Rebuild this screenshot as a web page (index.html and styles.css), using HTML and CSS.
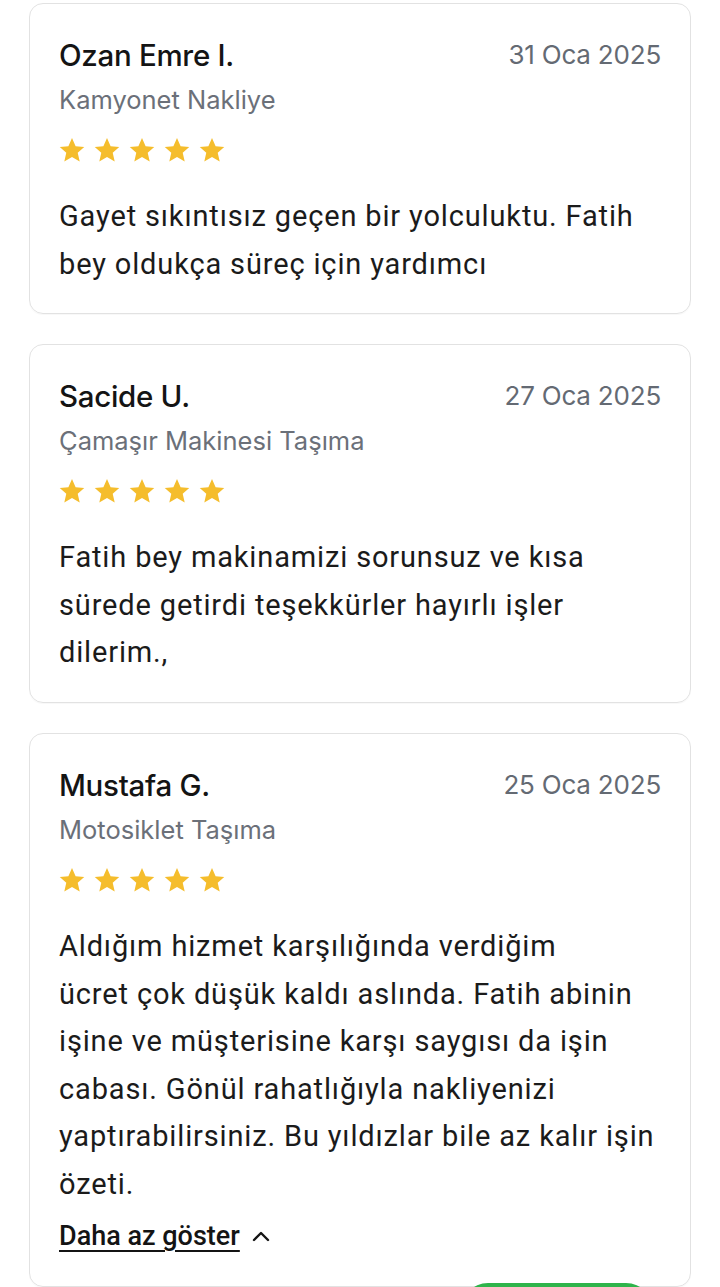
FILE: index.html
```html
<!DOCTYPE html>
<html lang="tr">
<head>
<meta charset="utf-8">
<link rel="stylesheet" href="styles.css">
</head>
<body>
<main class="list">
  <article class="card">
    <header class="head">
      <h3 class="name">Ozan Emre I.</h3>
      <span class="date">31 Oca 2025</span>
    </header>
    <p class="service">Kamyonet Nakliye</p>
    <div class="stars">
      <svg viewBox="0 0 24 24"><path d="M12 1.8l3.1 6.9 7.4.7-5.6 5 1.7 7.4L12 17.9l-6.6 3.9 1.7-7.4-5.6-5 7.4-.7z"/></svg>
      <svg viewBox="0 0 24 24"><path d="M12 1.8l3.1 6.9 7.4.7-5.6 5 1.7 7.4L12 17.9l-6.6 3.9 1.7-7.4-5.6-5 7.4-.7z"/></svg>
      <svg viewBox="0 0 24 24"><path d="M12 1.8l3.1 6.9 7.4.7-5.6 5 1.7 7.4L12 17.9l-6.6 3.9 1.7-7.4-5.6-5 7.4-.7z"/></svg>
      <svg viewBox="0 0 24 24"><path d="M12 1.8l3.1 6.9 7.4.7-5.6 5 1.7 7.4L12 17.9l-6.6 3.9 1.7-7.4-5.6-5 7.4-.7z"/></svg>
      <svg viewBox="0 0 24 24"><path d="M12 1.8l3.1 6.9 7.4.7-5.6 5 1.7 7.4L12 17.9l-6.6 3.9 1.7-7.4-5.6-5 7.4-.7z"/></svg>
    </div>
    <p class="text">Gayet sıkıntısız geçen bir yolculuktu. Fatih<br>bey oldukça süreç için yardımcı</p>
  </article>

  <article class="card">
    <header class="head">
      <h3 class="name">Sacide U.</h3>
      <span class="date">27 Oca 2025</span>
    </header>
    <p class="service">Çamaşır Makinesi Taşıma</p>
    <div class="stars">
      <svg viewBox="0 0 24 24"><path d="M12 1.8l3.1 6.9 7.4.7-5.6 5 1.7 7.4L12 17.9l-6.6 3.9 1.7-7.4-5.6-5 7.4-.7z"/></svg>
      <svg viewBox="0 0 24 24"><path d="M12 1.8l3.1 6.9 7.4.7-5.6 5 1.7 7.4L12 17.9l-6.6 3.9 1.7-7.4-5.6-5 7.4-.7z"/></svg>
      <svg viewBox="0 0 24 24"><path d="M12 1.8l3.1 6.9 7.4.7-5.6 5 1.7 7.4L12 17.9l-6.6 3.9 1.7-7.4-5.6-5 7.4-.7z"/></svg>
      <svg viewBox="0 0 24 24"><path d="M12 1.8l3.1 6.9 7.4.7-5.6 5 1.7 7.4L12 17.9l-6.6 3.9 1.7-7.4-5.6-5 7.4-.7z"/></svg>
      <svg viewBox="0 0 24 24"><path d="M12 1.8l3.1 6.9 7.4.7-5.6 5 1.7 7.4L12 17.9l-6.6 3.9 1.7-7.4-5.6-5 7.4-.7z"/></svg>
    </div>
    <p class="text">Fatih bey makinamizi sorunsuz ve kısa<br>sürede getirdi teşekkürler hayırlı işler<br>dilerim.,</p>
  </article>

  <article class="card">
    <header class="head">
      <h3 class="name">Mustafa G.</h3>
      <span class="date">25 Oca 2025</span>
    </header>
    <p class="service">Motosiklet Taşıma</p>
    <div class="stars">
      <svg viewBox="0 0 24 24"><path d="M12 1.8l3.1 6.9 7.4.7-5.6 5 1.7 7.4L12 17.9l-6.6 3.9 1.7-7.4-5.6-5 7.4-.7z"/></svg>
      <svg viewBox="0 0 24 24"><path d="M12 1.8l3.1 6.9 7.4.7-5.6 5 1.7 7.4L12 17.9l-6.6 3.9 1.7-7.4-5.6-5 7.4-.7z"/></svg>
      <svg viewBox="0 0 24 24"><path d="M12 1.8l3.1 6.9 7.4.7-5.6 5 1.7 7.4L12 17.9l-6.6 3.9 1.7-7.4-5.6-5 7.4-.7z"/></svg>
      <svg viewBox="0 0 24 24"><path d="M12 1.8l3.1 6.9 7.4.7-5.6 5 1.7 7.4L12 17.9l-6.6 3.9 1.7-7.4-5.6-5 7.4-.7z"/></svg>
      <svg viewBox="0 0 24 24"><path d="M12 1.8l3.1 6.9 7.4.7-5.6 5 1.7 7.4L12 17.9l-6.6 3.9 1.7-7.4-5.6-5 7.4-.7z"/></svg>
    </div>
    <p class="text">Aldığım hizmet karşılığında verdiğim<br>ücret çok düşük kaldı aslında. Fatih abinin<br>işine ve müşterisine karşı saygısı da işin<br>cabası. Gönül rahatlığıyla nakliyenizi<br>yaptırabilirsiniz. Bu yıldızlar bile az kalır işin<br>özeti.</p>
    <a class="toggle" href="#"><span class="toggle-label">Daha az göster</span>
      <svg class="chev" viewBox="0 0 20 20"><path d="M3 14l7-7 7 7"/></svg>
    </a>
  </article>
</main>
<div class="fab"></div>
</body>
</html>
```

FILE: styles.css
```css
* { box-sizing: border-box; }

html, body {
  margin: 0;
  padding: 0;
  background: #ffffff;
}

body {
  font-family: Roboto, "Liberation Sans", sans-serif;
  color: #1b1b1b;
  overflow: hidden;
  height: 1287px;
}

.list {
  display: flex;
  flex-direction: column;
  gap: 30px;
  padding: 3px 29px 0 29px;
}

.card {
  border: 1px solid #e2e2e2;
  border-radius: 14px;
  padding: 33px 29px 25px 29px;
  display: flex;
  flex-direction: column;
  box-shadow: 0 1px 1px rgba(0,0,0,0.03);
}

.head {
  display: flex;
  justify-content: space-between;
  align-items: center;
  height: 36px;
}

.name {
  margin: 0;
  font-family: Inter, "Noto Sans", sans-serif;
  font-weight: 500;
  font-size: 29.5px;
  letter-spacing: -0.3px;
  color: #141414;
  line-height: 36px;
}

.date {
  font-family: Inter, "Noto Sans", sans-serif;
  font-size: 26px;
  color: #646a73;
  line-height: 36px;
  letter-spacing: -0.2px;
}

.service {
  margin: 8px 0 0 0;
  font-family: Inter, "Noto Sans", sans-serif;
  font-size: 25.5px;
  line-height: 38px;
  color: #6b7079;
}

.stars {
  display: flex;
  gap: 7px;
  margin-top: 17px;
  height: 28px;
  margin-left: -1px;
}

.stars svg {
  width: 28px;
  height: 28px;
  fill: #f5bd2c;
}

.text {
  margin: 29px 0 0 0;
  font-size: 29px;
  letter-spacing: 0.85px;
  line-height: 47.6px;
  color: #1b1b1b;
  white-space: nowrap;
}

.toggle {
  display: flex;
  align-items: center;
  gap: 11px;
  margin-top: 9px;
  height: 36px;
  color: #141414;
  text-decoration: none;
  margin-bottom: 7px;
}

.toggle-label {
  font-size: 27px;
  font-weight: 500;
  text-decoration: underline;
  text-underline-offset: 5px;
  text-decoration-thickness: 1.5px;
}

.chev {
  width: 20px;
  height: 20px;
  fill: none;
  stroke: #141414;
  stroke-width: 2.4;
  stroke-linecap: round;
  stroke-linejoin: round;
}

.fab {
  position: fixed;
  left: 460px;
  top: 1283px;
  width: 194px;
  height: 56px;
  border-radius: 28px;
  background: #2eb44b;
}
```
